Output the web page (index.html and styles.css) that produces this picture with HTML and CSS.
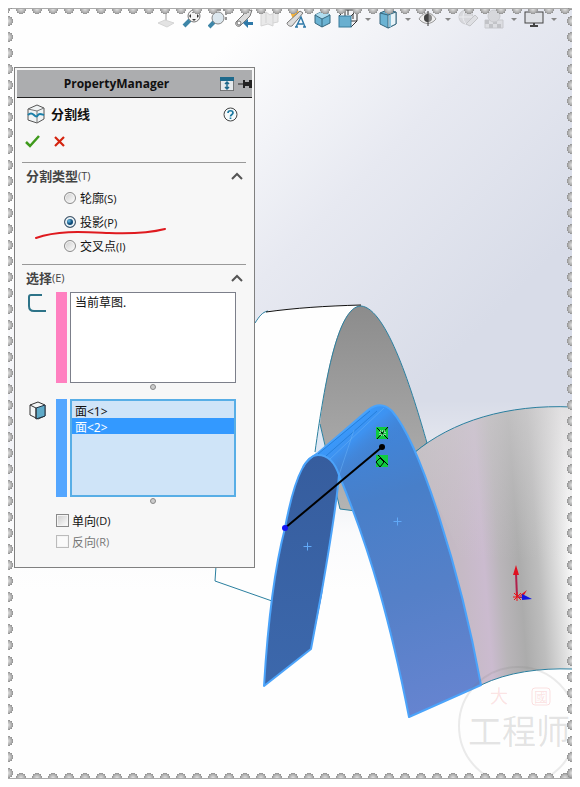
FILE: index.html
```html
<!DOCTYPE html>
<html lang="zh-CN">
<head>
    <meta charset="UTF-8">
    <meta name="viewport" content="width=device-width, initial-scale=1.0">
    <title>PropertyManager</title>
    <link rel="stylesheet" href="styles.css">
</head>
<body>

<main class="stamp">
    <!-- 3D model view -->
    <svg class="scene" viewBox="8 8 564 771" preserveAspectRatio="xMidYMid slice" aria-hidden="true">
        <defs>
            <linearGradient id="sky" gradientUnits="userSpaceOnUse" x1="210" y1="60" x2="480" y2="330">
                <stop offset="0" stop-color="#fefefe"/>
                <stop offset="0.5" stop-color="#e7e9f1"/>
                <stop offset="1" stop-color="#d8dce8"/>
            </linearGradient>
            <linearGradient id="ground" x1="0" y1="0" x2="0" y2="1">
                <stop offset="0" stop-color="#fefefe" stop-opacity="0"/>
                <stop offset="0.7" stop-color="#fefefe" stop-opacity="0.9"/>
                <stop offset="1" stop-color="#fefefe"/>
            </linearGradient>
            <linearGradient id="arch" x1="0" y1="0" x2="0" y2="1">
                <stop offset="0" stop-color="#8c8c8c"/>
                <stop offset="0.5" stop-color="#a0a0a0"/>
                <stop offset="1" stop-color="#b4b4b4"/>
            </linearGradient>
            <linearGradient id="wave" gradientUnits="userSpaceOnUse" x1="414" y1="560" x2="572" y2="548">
                <stop offset="0" stop-color="#bdb8bc"/>
                <stop offset="0.3" stop-color="#c6bac6"/>
                <stop offset="0.44" stop-color="#cbbbcf"/>
                <stop offset="0.54" stop-color="#b9b5b9"/>
                <stop offset="0.66" stop-color="#acacac"/>
                <stop offset="0.78" stop-color="#bdbdbd"/>
                <stop offset="0.9" stop-color="#dedede"/>
                <stop offset="1" stop-color="#fcfcfc"/>
            </linearGradient>
            <linearGradient id="waveTop" gradientUnits="userSpaceOnUse" x1="0" y1="405" x2="0" y2="560">
                <stop offset="0" stop-color="#cfcdcf" stop-opacity="0.6"/>
                <stop offset="1" stop-color="#cfcdcf" stop-opacity="0"/>
            </linearGradient>
            <linearGradient id="leg" gradientUnits="userSpaceOnUse" x1="350" y1="430" x2="440" y2="710">
                <stop offset="0" stop-color="#3f86dc"/>
                <stop offset="0.25" stop-color="#487fc9"/>
                <stop offset="0.6" stop-color="#5580c8"/>
                <stop offset="1" stop-color="#6684d0"/>
            </linearGradient>
            <linearGradient id="ridge" gradientUnits="userSpaceOnUse" x1="338" y1="430" x2="366" y2="464">
                <stop offset="0" stop-color="#379bff"/>
                <stop offset="0.4" stop-color="#3e92f0"/>
                <stop offset="1" stop-color="#467fca" stop-opacity="0"/>
            </linearGradient>
            <linearGradient id="inner" x1="0" y1="0" x2="0" y2="1">
                <stop offset="0" stop-color="#365d9e"/>
                <stop offset="1" stop-color="#3c68ac"/>
            </linearGradient>
        </defs>

        <rect x="0" y="0" width="580" height="787" fill="url(#sky)"/>
        <rect x="0" y="400" width="580" height="190" fill="url(#ground)"/>
        <rect x="0" y="589" width="580" height="198" fill="#fefefe"/>

        <!-- back strip -->
        <path fill="#fefefe" d="M215 581 L216 340 L255 323 C260 316 263 311 268 311 C300 308 330 305 361 305 C340 312 328 370 320 425 C316 440 314 460 316 500 L290 606 Z"/>
        <path fill="url(#arch)" d="M320 425 C325 380 338 306 361 306 C387 308 413 394 427 443 L414 455 L356 511 L340 509 Z"/>
        <path fill="#dfe8f4" d="M320 424 L326 448 L315 455 Z"/>
        <g fill="none" stroke="#2a7f9f">
            <path d="M216 566 L215 581 L272 601"/>
            <path d="M255 323 C259 317 262 312 268 311"/>
            <path d="M315 452 C325 380 338 306 361 306 C387 308 413 394 427 443 L414 453"/>
            <path d="M320 424 L340 509 L356 511"/>
        </g>
        <path fill="none" stroke="#111" d="M266 312 C295 308 325 306 361 305"/>

        <!-- right surface -->
        <path fill="url(#wave)" d="M414 453 C452 421 508 404 572 407 L572 669 C540 668 508 672 481 685 Z"/>
        <path fill="url(#waveTop)" d="M414 453 C452 421 508 404 572 407 L572 600 L481 600 Z"/>
        <path fill="none" stroke="#2a7f9f" d="M414 453 C452 421 508 404 572 407 M481 685 C508 672 540 668 572 669"/>

        <!-- selected faces -->
        <path fill="url(#leg)" d="M318 455 L368 410 C377 403 385 404 392 411 C420 443 460 570 481 685 L409 717 C391 625 371 552 339 475 Z"/>
        <path fill="url(#ridge)" d="M312 458 L368 410 C377 403 385 404 392 411 C404 425 412 442 420 462 L345 500 L338 474 Z"/>
        <path fill="url(#inner)" d="M264 686 C268 620 274 570 285 528 C292 490 302 455 318 455 C329 455 335 463 339 475 C338 500 328 545 322 595 L311 649 Z"/>
        <g fill="none" stroke="#4ba3fa" stroke-width="2" stroke-linejoin="round">
            <path d="M264 686 C268 620 274 570 285 528 C292 490 302 455 318 455 C329 455 335 463 339 475 C336 510 328 555 322 590 L311 649 Z"/>
            <path d="M303 467 C306 461 311 457 318 453 L368 410 C377 403 385 404 392 411 C420 443 460 570 481 685 L409 717 C391 625 371 552 339 475"/>
        </g>
        <path fill="none" stroke="#2580dd" d="M318 454 L370 411 M326 456 L377 411"/>
        <path fill="none" stroke="#6ab1f5" stroke-opacity="0.5" d="M339 475 L354 430 M330 459 L384 408"/>
        <path fill="none" stroke="#61a9f7" d="M303.500 546.500 h8 M307.500 542.500 v8 M393.500 521.500 h8 M397.500 517.500 v8"/>

        <!-- sketch line with its relations -->
        <path stroke="#000" stroke-width="2" d="M285 528 L382 447"/>
        <circle cx="382" cy="447" r="3"/>
        <circle cx="285" cy="528" r="3" fill="#1414f5"/>
        <rect x="376" y="427" width="12" height="12" fill="#0fcb3f"/>
        <path stroke="#000" d="M377 428 L388 439 M388 427 L377 439"/>
        <path stroke="#fff" stroke-dasharray="1 1" fill="none" d="M380 431 h5 v4 h-5 z"/>
        <rect x="376" y="455" width="12" height="12" fill="#0fcb3f"/>
        <path stroke="#000" fill="none" d="M378 455 L388 465 M380 458 L384 462 L380 467 L376 462 Z"/>

        <!-- origin triad -->
        <path stroke="#b0204c" stroke-width="2" d="M517 597 L516 573"/>
        <path fill="#e01020" d="M516 565 L519 575 L513 575 Z M519 596 L527 590 L524 595 Z"/>
        <path fill="#1212e0" d="M522 594 L532 599 L522 600 Z"/>
        <path stroke="#1212e0" d="M518 597 L524 598"/>
        <path stroke="#ee1515" d="M513 597 h9 M517 592 v9 M514 593 l7 7 M521 593 l-7 7"/>

        <!-- maker's seal -->
        <g class="seal">
            <circle cx="518" cy="726" r="59" fill="none" stroke="#777" stroke-opacity="0.15" stroke-width="2"/>
            <text class="seal-name" x="519" y="744" text-anchor="middle">工程师</text>
            <text class="seal-mark" x="499" y="703" text-anchor="middle">大</text>
            <text class="seal-mark small" x="541" y="702" text-anchor="middle">國</text>
            <rect x="532" y="688" width="18" height="17" rx="3" fill="none" stroke="#e33" stroke-opacity="0.15"/>
        </g>
    </svg>

    <nav class="toolbar" aria-label="视图">
        <button class="tool faded" aria-label="法向">
            <svg viewBox="0 0 20 20"><path d="M10 2v12" stroke="#888" stroke-width="2"/><path d="M2 14l7-3 9 3-7 4z" fill="#bbb" stroke="#999"/></svg>
        </button>
        <button class="tool" aria-label="整屏显示">
            <svg viewBox="0 0 20 20"><path d="M2 17l6-6" stroke="#3e86a8" stroke-width="4"/><circle cx="12" cy="7" r="6" fill="#f4f4f4" stroke="#777"/><path d="M12 2l2 2h-4zM12 12l2-2h-4zM7 7l2-2v4zM17 7l-2-2v4z" fill="#333"/></svg>
        </button>
        <button class="tool" aria-label="局部放大">
            <svg viewBox="0 0 20 20"><path d="M10 1h8v12" fill="none" stroke="#333" stroke-dasharray="3 2"/><path d="M1 18l6-6" stroke="#3e86a8" stroke-width="4"/><circle cx="10" cy="9" r="6" fill="#dce7ee" stroke="#888"/></svg>
        </button>
        <button class="tool" aria-label="上一视图">
            <svg viewBox="0 0 20 20"><path d="M2 13L13 2l5-1-2 6L6 17c-3 1-5-1-4-4z" fill="#ddd" stroke="#777"/><circle cx="5" cy="14" r="2" fill="#fff" stroke="#777"/><path d="M9 14l5-4v3h5v3h-5v3z" fill="#2f79a8"/></svg>
        </button>
        <button class="tool faded" aria-label="剖面视图">
            <svg viewBox="0 0 20 20"><path d="M1 5l5-2 4 3 8-4v11l-5 1v3l-5-2-7 2z" fill="#ccc" stroke="#999"/><path d="M6 3v11M13 5v9" stroke="#999"/></svg>
        </button>
        <button class="tool" aria-label="动态注解视图">
            <svg viewBox="0 0 20 20"><path d="M4 3l8-2 2 5-7 4z" fill="#f5b23a"/><path d="M1 14L14 2l3 2L6 17c-2 1-5-1-5-3z" fill="#ddd" stroke="#777"/><path d="M10 18l5-10 4 10M12 15h5M9 18h3M17 18h3" fill="none" stroke="#2f79a8" stroke-width="1.500"/></svg>
        </button>
        <button class="tool" aria-label="视图定向">
            <svg viewBox="0 0 20 20"><path d="M3 6l8-4 7 4v8l-8 4-7-4z" fill="#6bb3d3" stroke="#37677e"/><path d="M3 6l8-4 7 4-8 4z" fill="#b0dcee"/><path d="M3 6l7 4 8-4M10 10v8" fill="none" stroke="#37677e"/></svg>
        </button>
        <button class="tool" aria-label="标准视图">
            <svg viewBox="0 0 20 20"><path d="M1 7l6-6h12v11l-6 6M13 7l6-6M7 1v11h12M7 12l-6 6" fill="none" stroke="#333"/><rect x="1" y="7" width="12" height="11" fill="#69afd0" stroke="#397b9b"/><path d="M10 1v5M15 5v5" stroke="#333"/></svg>
        </button>
        <button class="more" aria-label="更多标准视图"></button>
        <button class="tool" aria-label="显示样式">
            <svg viewBox="0 0 20 20"><path d="M2 4l7-3 9 2v12l-8 4-8-4z" fill="#6bb3d3" stroke="#37677e"/><path d="M10 6l8-3v12l-8 4z" fill="#e8f3f8" stroke="#37677e"/><path d="M2 4l8 2" stroke="#37677e"/><path d="M12 6v12" stroke="#8bc2db" stroke-width="2"/></svg>
        </button>
        <button class="more" aria-label="更多显示样式"></button>
        <button class="tool" aria-label="隐藏/显示项目">
            <svg viewBox="0 0 20 20"><path d="M1 10c5-8 12-8 17 0-5 6-12 6-17 0z" fill="#eee" stroke="#999"/><circle cx="10" cy="9" r="4" fill="#888"/><path d="M10 2v15" stroke="#333"/><path d="M10 5a4 4 0 0 0 0 8z" fill="#444"/></svg>
        </button>
        <button class="more" aria-label="更多项目"></button>
        <button class="tool faded" aria-label="编辑外观">
            <svg viewBox="0 0 20 20"><circle cx="8" cy="8" r="7" fill="#bbb" stroke="#999"/><path d="M1 8h14M8 1c-4 4-4 10 0 14" fill="none" stroke="#eee"/><path d="M8 15l9-9 3 3-8 8z" fill="#ccc" stroke="#888"/></svg>
        </button>
        <button class="tool faded" aria-label="应用布景">
            <svg viewBox="0 0 20 20"><path d="M1 11h18v8H1z" fill="#ccc" stroke="#999"/><path d="M1 11h4v4H1zM9 11h4v4H9zM5 15h4v4H5zM13 15h4v4h-4z" fill="#888"/><circle cx="10" cy="7" r="6" fill="#bbb" stroke="#999"/></svg>
        </button>
        <button class="more" aria-label="更多布景"></button>
        <button class="tool" aria-label="视图设定">
            <svg viewBox="0 0 20 20"><rect x="1" y="3" width="18" height="11" fill="#dfe1e6" stroke="#444"/><path d="M10 14v3M6 17h8" stroke="#444" stroke-width="2"/></svg>
        </button>
        <button class="more" aria-label="更多设定"></button>
    </nav>

    <form class="panel">
        <header class="panel-bar">
            <h1>PropertyManager</h1>
            <button type="button" class="icon-btn" aria-label="自动调整">
                <svg width="14" height="14" viewBox="0 0 14 14"><rect x="0.500" y="0.500" width="13" height="13" fill="#e4e9ec" stroke="#222" stroke-dasharray="1 1"/><path d="M0 0h14v4H0z" fill="#1f6a8c"/><path d="M7 5v7M5 7l2-2 2 2M5 10l2 2 2-2" fill="none" stroke="#1f6a8c" stroke-width="1.500"/></svg>
            </button>
            <button type="button" class="icon-btn" aria-label="固定">
                <svg width="14" height="10" viewBox="0 0 14 10"><path d="M0 5h6" stroke="#222"/><path d="M5 1h2v2h4V1h3v8h-3V7H7v2H5z" fill="#222"/></svg>
            </button>
        </header>

        <div class="feature">
            <svg width="18" height="20" viewBox="0 0 18 20"><path d="M1 5l9-4 7 3v11l-7 4-9-3z" fill="#f0f3f4" stroke="#555"/><path d="M1 5l9 2 7-3M10 7v12" fill="none" stroke="#777"/><path d="M1 11c2-2 4-2 6 0s3 2 4 0 3-1 6 0" fill="none" stroke="#1b7fa8" stroke-width="2"/></svg>
            <h2>分割线</h2>
            <button type="button" class="icon-btn" aria-label="帮助">
                <svg width="15" height="15" viewBox="0 0 15 15"><circle cx="7.500" cy="7.500" r="6.500" fill="#f4fafc" stroke="#444"/><path d="M5 6c0-3 5-3 5 0 0 1.500-2.500 1.500-2.500 3.500M7.500 10.500v1.500" fill="none" stroke="#1b78a0" stroke-width="1.700"/></svg>
            </button>
        </div>

        <div class="confirm">
            <button type="button" class="icon-btn" aria-label="确定">
                <svg width="15" height="13" viewBox="0 0 15 13"><path d="M1 7l4 4L14 1" fill="none" stroke="#3f9a1c" stroke-width="2.500"/></svg>
            </button>
            <button type="button" class="icon-btn" aria-label="取消">
                <svg width="11" height="11" viewBox="0 0 11 11"><path d="M1 1l9 9M10 1l-9 9" stroke="#d4240f" stroke-width="2.200"/></svg>
            </button>
        </div>

        <section class="group">
            <h3>分割类型<small>(T)</small>
                <button type="button" class="icon-btn" aria-label="折叠分割类型"><svg width="12" height="8" viewBox="0 0 12 8"><path d="M1 7l5-5 5 5" fill="none" stroke="#555" stroke-width="2"/></svg></button>
            </h3>
            <div class="choices">
                <label><input type="radio" name="type">轮廓<small>(S)</small></label>
                <label><input type="radio" name="type" checked>投影<small>(P)</small></label>
                <label><input type="radio" name="type">交叉点<small>(I)</small></label>
                <svg class="underline" width="134" height="12" viewBox="0 0 134 12" aria-hidden="true"><path d="M2 10C25 2 50 4 75 5s40 0 56-4" fill="none" stroke="#df1a1f" stroke-width="2" stroke-linecap="round"/></svg>
            </div>
        </section>

        <section class="group">
            <h3>选择<small>(E)</small>
                <button type="button" class="icon-btn" aria-label="折叠选择"><svg width="12" height="8" viewBox="0 0 12 8"><path d="M1 7l5-5 5 5" fill="none" stroke="#555" stroke-width="2"/></svg></button>
            </h3>
            <div class="pick">
                <svg width="18" height="20" viewBox="0 0 18 20"><path d="M14 2H3Q1 2 1 4v9q0 5 5 5h12" fill="none" stroke="#2d7388" stroke-width="2"/></svg>
                <span class="swatch pink"></span>
                <select class="list" size="5" aria-label="草图">
                    <option>当前草图.</option>
                </select>
            </div>
            <span class="grip"></span>
            <div class="pick">
                <svg width="18" height="20" viewBox="0 0 18 20"><path d="M2 5l8-3 7 3v11l-7 3-8-4z" fill="#f4f6f6" stroke="#333"/><path d="M8 8l9-3v11l-9 3z" fill="#5faac8" stroke="#234"/><path d="M2 5l6 3v11" fill="none" stroke="#333"/></svg>
                <span class="swatch blue"></span>
                <select class="list active" size="5" aria-label="面">
                    <option>面&lt;1&gt;</option>
                    <option selected>面&lt;2&gt;</option>
                </select>
            </div>
            <span class="grip"></span>
            <div class="flags">
                <label><input type="checkbox">单向<small>(D)</small></label>
                <label class="off"><input type="checkbox" disabled>反向<small>(R)</small></label>
            </div>
        </section>
    </form>
</main>

</body>
</html>
```

FILE: styles.css
```css
* {
    box-sizing: border-box;
}
body {
    margin: 8px;
    background-color: #fff;
    font-family: "Open Sans", "Noto Sans CJK SC", sans-serif;
    font-size: 12px;
    color: #111;
}
button {
    padding: 0;
    border: none;
    background: none;
    cursor: pointer;
}
svg {
    display: block;
}
small {
    font-size: 11px;
    font-weight: normal;
}

/* page with a perforated edge */
.stamp {
    position: relative;
    min-height: calc(100vh - 16px);
    padding-bottom: 24px;
    box-shadow: 0 0 7px 1px #888;
}
.stamp::before,
.stamp::after {
    content: "";
    position: absolute;
    inset: 0;
    z-index: 1;
    pointer-events: none;
}
.stamp::before {
    background:
        radial-gradient(circle at 8px 0, #e4e4e4 0, #aaa 4px, #909090 5px, transparent 5px) 5px 0 / 16px 6px repeat-x,
        radial-gradient(circle at 8px 6px, #e4e4e4 0, #aaa 4px, #909090 5px, transparent 5px) 5px 100% / 16px 6px repeat-x;
    border-top: 1px solid #aaa;
    border-bottom: 1px solid #aaa;
}
.stamp::after {
    background:
        radial-gradient(circle at 0 8px, #e4e4e4 0, #aaa 4px, #909090 5px, transparent 5px) 0 5px / 6px 16px repeat-y,
        radial-gradient(circle at 6px 8px, #e4e4e4 0, #aaa 4px, #909090 5px, transparent 5px) 100% 5px / 6px 16px repeat-y;
}
.scene {
    position: absolute;
    width: 100%;
    height: 100%;
}
.seal-name {
    font-family: "Noto Sans CJK SC", sans-serif;
    font-size: 34px;
    fill: rgba(90, 90, 90, 0.16);
}
.seal-mark {
    font-family: "Noto Sans CJK TC", sans-serif;
    font-size: 18px;
    fill: rgba(230, 50, 50, 0.15);
}
.seal-mark.small {
    font-size: 14px;
}

/* view toolbar */
.toolbar {
    position: relative;
    display: flex;
    justify-content: flex-end;
    align-items: center;
    gap: 6px;
    padding: 1px 14px 0 0;
}
.tool {
    width: 20px;
    height: 20px;
}
.tool svg {
    width: 20px;
    height: 20px;
    fill: none;
}
.faded {
    opacity: 0.4;
}
.more {
    width: 8px;
    height: 20px;
}
.more::before {
    content: "";
    display: block;
    margin: 0 auto;
    width: 0;
    border: 3px solid transparent;
    border-top-color: #888;
    border-bottom: none;
}

/* property panel */
.panel {
    position: relative;
    width: 241px;
    margin: 38px 0 0 6px;
    padding: 2px;
    border: 1px solid #808080;
    background-color: #f7f7f7;
}
.panel-bar {
    display: flex;
    align-items: center;
    gap: 4px;
    height: 28px;
    background-color: #acadaf;
    border-bottom: 1px solid #222;
}
.panel-bar h1 {
    flex: 1;
    margin: 0;
    text-align: center;
    font-size: 12px;
    line-height: 16px;
}
.feature {
    display: flex;
    align-items: center;
    gap: 6px;
    height: 32px;
    padding: 0 14px 0 10px;
}
.feature h2 {
    flex: 1;
    margin: 0;
    font-size: 13px;
    line-height: 20px;
}
.confirm {
    display: flex;
    align-items: center;
    gap: 14px;
    height: 22px;
    padding-left: 8px;
    margin-bottom: 10px;
}
.group {
    margin: 0 6px 0 5px;
    border-top: 1px solid #999;
    padding: 3px 0 6px;
}
.group h3 {
    display: flex;
    align-items: center;
    margin: 0;
    padding: 0 3px 0 4px;
    font-size: 13px;
    line-height: 20px;
    color: #444;
}
.group h3 .icon-btn {
    margin-left: auto;
}
.choices {
    position: relative;
    padding-left: 42px;
}
.choices label,
.flags label {
    display: flex;
    align-items: center;
}
.choices label {
    height: 24px;
}
.underline {
    position: absolute;
    left: 12px;
    top: 42px;
}
input {
    appearance: none;
    margin: 0;
    border: 1px solid #8a8a8a;
    background: linear-gradient(135deg, #ccc, #fff);
    box-shadow: inset 0 0 0 1px #f4f4f4;
}
input[type="radio"] {
    width: 12px;
    height: 12px;
    margin-right: 4px;
    border-radius: 50%;
}
input[type="radio"]:checked {
    border-color: #456;
    background: radial-gradient(circle at 4px 4px, #6cc0e8, #0d4a78 3px, #0d4a78 4px);
    box-shadow: inset 0 0 0 2px #e8f0f4;
}
input[type="checkbox"] {
    width: 13px;
    height: 13px;
    margin-right: 3px;
}
input:disabled {
    border-color: #bbb;
    background: #fafafa;
}
.pick {
    display: flex;
    align-items: flex-start;
    padding: 0 10px 0 6px;
}
.pick svg {
    margin: 1px 10px 0 0;
}
.swatch {
    align-self: stretch;
    width: 11px;
    margin-right: 3px;
}
.pink {
    background-color: #ff80c0;
}
.blue {
    background-color: #54a6ff;
}
.group h3 + .pick {
    margin-top: 4px;
}
.list {
    flex: 1;
    min-width: 0;
    height: 91px;
    padding: 0;
    border: 1px solid #7c7f8a;
    border-radius: 0;
    outline: none;
    overflow: hidden;
    background-color: #fff;
    font-family: "Noto Sans", "Noto Sans CJK SC", sans-serif;
    font-size: 12px;
    color: #111;
}
.list option {
    height: 16px;
    min-height: 16px;
    padding: 0 4px;
    line-height: 14px;
}
.list.active {
    height: 98px;
    padding: 1px 0 0;
    border: 2px solid #58aee6;
    background-color: #cfe4f8;
}
.list.active option {
    padding: 0 3px;
}
.list option:checked {
    background: #3399ff linear-gradient(#3399ff, #3399ff);
    -webkit-text-fill-color: #fff;
}
.grip {
    display: block;
    width: 6px;
    height: 6px;
    margin: 1px auto 6px 128px;
    border: 1px solid #888;
    border-radius: 50%;
    background-color: #ccc;
}
.grip + .pick {
    margin-top: 9px;
}
.flags label {
    height: 21px;
}
.flags {
    padding: 0 0 7px 34px;
}
.off {
    color: #777;
}
```
